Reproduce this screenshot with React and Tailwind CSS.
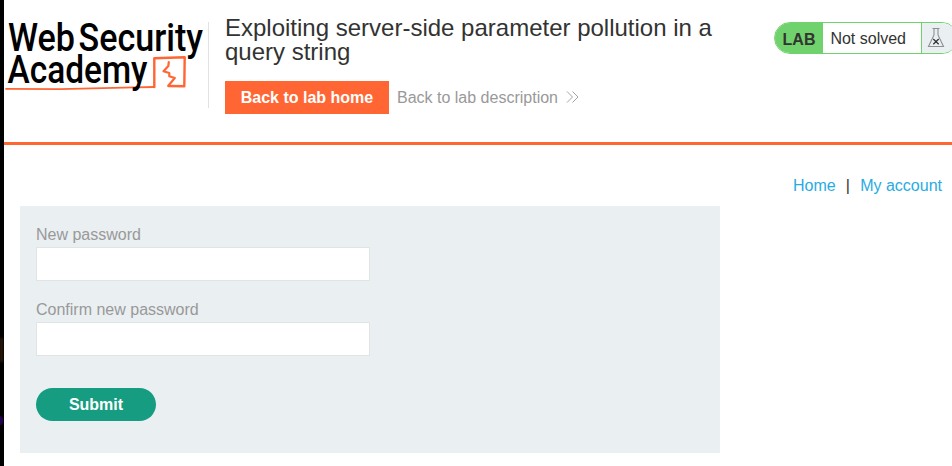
function Logo() {
  return (
    <svg className="h-[86px] w-[204px] shrink-0 overflow-visible" viewBox="4 22 204 86" role="img" aria-label="Web Security Academy">
      <g fill="none" stroke="#ff6633" strokeLinecap="round" strokeLinejoin="round">
        <path d="M6 88.8 L60 89.2 L135 87.4 L154.3 87" strokeWidth="1.8" />
        <path d="M154.3 87 L154.3 58.3 L184.7 57.3 L184.3 86.3 L168.5 86" strokeWidth="2.4" />
        <path d="M168.8 62 L168.3 66 L163.5 71.3 L169.3 73 L169.3 76.3 L174.8 78 L168.5 85.5" strokeWidth="2.2" />
      </g>
      <g fontFamily="Roboto, 'Liberation Sans', sans-serif" fontWeight="500" fontSize="38" fill="#000">
        <text x="8" y="50.7" textLength="67" lengthAdjust="spacingAndGlyphs">Web</text>
        <text x="78.5" y="50.7" textLength="124.5" lengthAdjust="spacingAndGlyphs">Security</text>
        <text x="7.5" y="83" textLength="140" lengthAdjust="spacingAndGlyphs">Academy</text>
      </g>
    </svg>
  );
}

function Flask() {
  return (
    <svg className="h-[22px] w-[18px]" viewBox="0 0 18 22" fill="none">
      <path d="M5.5 1.5 H12.5 M7 2 V8 L1.5 19.5 H16.5 L11 8 V2" stroke="#8d8f90" strokeWidth="1.1" />
      <path d="M6.3 12 L11.7 17.2 M11.7 12 L6.3 17.2" stroke="#333332" strokeWidth="1.3" />
    </svg>
  );
}

function Field({ label }) {
  return (
    <label className="block h-[75px] leading-[25px] text-[#999]">
      {label}
      <input type="password" className="block h-[34px] w-[334px] border border-[#e0e4e4] bg-white px-2 outline-none" />
    </label>
  );
}

export default function App() {
  return (
    <div className="flex h-[466px] w-[952px] overflow-hidden bg-white font-['Liberation_Sans',Arial,sans-serif] text-base text-[#333332]">
      <div className="w-1 shrink-0 overflow-hidden bg-black">
        <div className="mt-[338px] h-6 w-[3px] bg-[#2b190c] blur-[1px]" />
        <div className="mt-[54px] -ml-1 h-[9px] w-[7px] rounded-full bg-[#250052] blur-[0.5px]" />
      </div>
      <div className="w-[948px] shrink-0">
        <header className="flex h-[145px] items-start border-b-[3px] border-[#ff6633]">
          <div className="mt-[22px] w-[205px] shrink-0 border-r border-[#e2e2e2]">
            <Logo />
          </div>
          <div className="ml-4 w-[549px] shrink-0 pt-4">
            <h1 className="w-[510px] text-2xl leading-6">
              Exploiting server-side parameter pollution in a query string
            </h1>
            <div className="mt-[17px] flex h-[33px] items-center">
              <a className="flex h-[33px] w-[164px] items-center justify-center bg-[#ff6633] font-bold text-white">Back to lab home</a>
              <a className="ml-2 flex items-center whitespace-nowrap text-[#999]">
                Back to lab description
                <svg className="mb-px ml-2 h-3 w-3.5" viewBox="0 0 14 12" fill="none" stroke="#999" strokeWidth="0.9">
                  <path d="M1 0.5 L6.5 6 L1 11.5 M6.5 0.5 L12 6 L6.5 11.5" />
                </svg>
              </a>
            </div>
          </div>
          <div className="mt-[22px] flex h-8 w-[184px] shrink-0 overflow-hidden rounded-full border border-[#70d26c]">
            <div className="flex w-12 shrink-0 items-center justify-center bg-[#70d26c] pt-[3px] font-bold">LAB</div>
            <div className="flex w-[98px] shrink-0 items-center whitespace-nowrap pl-[7.4px] pt-0.5">Not solved</div>
            <div className="flex-1 border-l border-[#70d26c] bg-[#eaeff2] pl-[5px] pt-[4px]">
              <Flask />
            </div>
          </div>
        </header>
        <nav className="flex h-[61px] items-start justify-end pr-[10px] pt-[29px] leading-6">
          <a className="text-[#29abe2]">Home</a>
          <span className="w-[24.5px] text-center">|</span>
          <a className="text-[#29abe2]">My account</a>
        </nav>
        <form className="ml-4 h-[247px] w-[700px] bg-[#eaeff2] px-4 pt-4">
          <Field label="New password" />
          <Field label="Confirm new password" />
          <button type="button" className="mt-4 block h-[33px] w-[120px] rounded-full bg-[#169c80] font-bold text-white">Submit</button>
        </form>
      </div>
    </div>
  );
}
